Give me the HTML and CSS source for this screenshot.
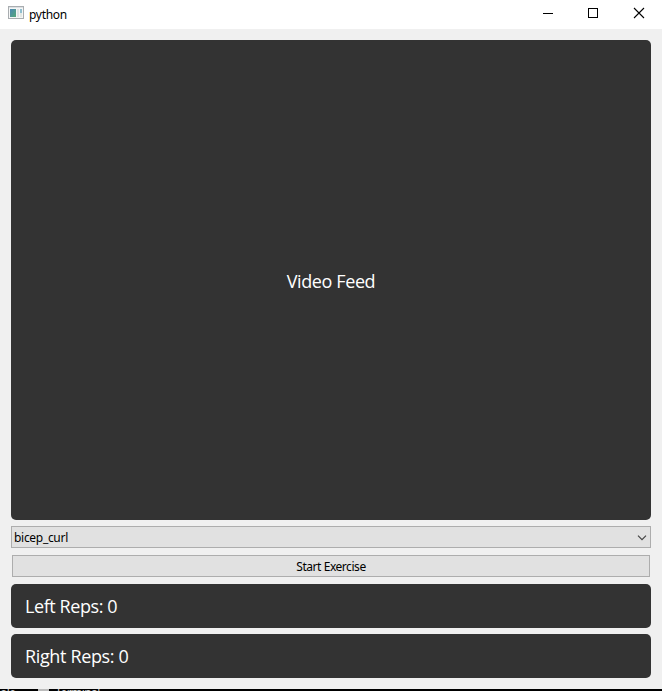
FILE: index.html
```html
<!DOCTYPE html>
<html lang="en">
<head>
<meta charset="utf-8">
<title>python</title>
<link rel="stylesheet" href="styles.css">
</head>
<body>
<div class="window">
  <header class="titlebar">
    <svg class="app-icon" width="16" height="16" viewBox="0 0 16 16" shape-rendering="crispEdges">
      <defs><linearGradient id="pane" x1="0" y1="0" x2="1" y2="1"><stop offset="0" stop-color="#4c87b5"/><stop offset="1" stop-color="#55a878"/></linearGradient></defs>
      <path fill="#a9adb0" d="M0 1h16v13H0z"/>
      <path fill="#dce0e3" d="M1 2h14v1H1z"/>
      <path fill="#f5f6f6" d="M1 3h14v10H1z"/>
      <path fill="url(#pane)" d="M2 4h6v8H2z"/>
      <path fill="#dfe2e4" d="M9 4h2v8H9z"/>
      <path fill="#8fbfd0" d="M12 4h2v4h-2z"/>
      <path fill="#e3e8e4" d="M12 8h2v4h-2z"/>
    </svg>
    <span class="title">python</span>
    <div class="controls">
      <svg width="46" height="29" viewBox="0 0 46 29" shape-rendering="crispEdges"><path fill="#000" d="M19 13h10v1H19z"/></svg>
      <svg width="46" height="29" viewBox="0 0 46 29" shape-rendering="crispEdges"><path fill="none" stroke="#000" d="M18.5 8.5h9v9h-9z"/></svg>
      <svg width="46" height="29" viewBox="0 0 46 29"><path fill="none" stroke="#000" stroke-width="1.1" d="M18 8l10 10M28 8L18 18"/></svg>
    </div>
  </header>
  <main class="content">
    <div class="panel video"><span class="video-text">Video Feed</span></div>
    <div class="select"><span class="select-text">bicep_curl</span>
      <svg width="10" height="6" viewBox="0 0 10 6"><path fill="none" stroke="#444" stroke-width="1.2" d="M1 .7l4 4 4-4"/></svg>
    </div>
    <button class="start"><span class="start-text">Start Exercise</span></button>
    <div class="panel reps"><span class="left-text">Left Reps: 0</span></div>
    <div class="panel reps"><span class="right-text">Right Reps: 0</span></div>
  </main>
  <footer class="behind"><span class="tab">ole</span><i class="tab-icon"></i><span class="tab">Terminal</span></footer>
</div>
</body>
</html>
```
FILE: styles.css
```css
* { box-sizing: border-box; }
body { margin: 0; background: #f0f0f0; font-family: "Noto Sans", "Open Sans", sans-serif; }
.window { width: 662px; height: 691px; display: flex; flex-direction: column; overflow: hidden; }
.titlebar { height: 29px; flex: none; background: #fff; display: flex; align-items: center; padding-left: 8px; font-size: 12px; color: #000; }
.app-icon { margin-top: -3px; }
.title { margin-left: 5px; margin-top: -1px; letter-spacing: -0.3px; }
.controls { margin-left: auto; display: flex; }
.content { height: 660px; flex: none; background: #f0f0f0; padding: 11px 11px 0; display: flex; flex-direction: column; }
.panel { background: #333; color: #fff; border-radius: 5px; display: flex; align-items: center; font-family: "Open Sans", "Noto Sans", sans-serif; font-size: 18px; line-height: 24px; white-space: nowrap; }
.video { height: 480px; justify-content: center; }
.video-text { letter-spacing: -0.4px; margin-top: 2px; }
.select { height: 22px; margin-top: 6px; border: 1px solid #adadad; background: #e1e1e1; display: flex; align-items: center; justify-content: space-between; padding: 1px 3px 0 2px; font-size: 12px; line-height: 16px; }
.select-text { letter-spacing: -0.3px; padding-top: 1px; }
.start { height: 22px; margin: 7px 1px 0; border: 1px solid #adadad; background: #e1e1e1; padding: 2px 0 0; font: 12px/16px "Noto Sans", "Open Sans", sans-serif; color: #000; }
.start-text { letter-spacing: -0.45px; }
.reps { height: 44px; margin-top: 6px; padding: 0 14px; }
.start + .reps { margin-top: 7px; }
.left-text { letter-spacing: -0.42px; }
.right-text { letter-spacing: -0.36px; }
.behind { height: 2px; flex: none; background: #000; color: #ccc; display: flex; align-items: flex-start; overflow: hidden; font-size: 12px; line-height: 12px; }
.tab { margin-top: -2px; letter-spacing: -0.6px; }
.tab-icon { width: 11px; height: 2px; background: #bbb; margin: 0 6px 0 23px; }
```
